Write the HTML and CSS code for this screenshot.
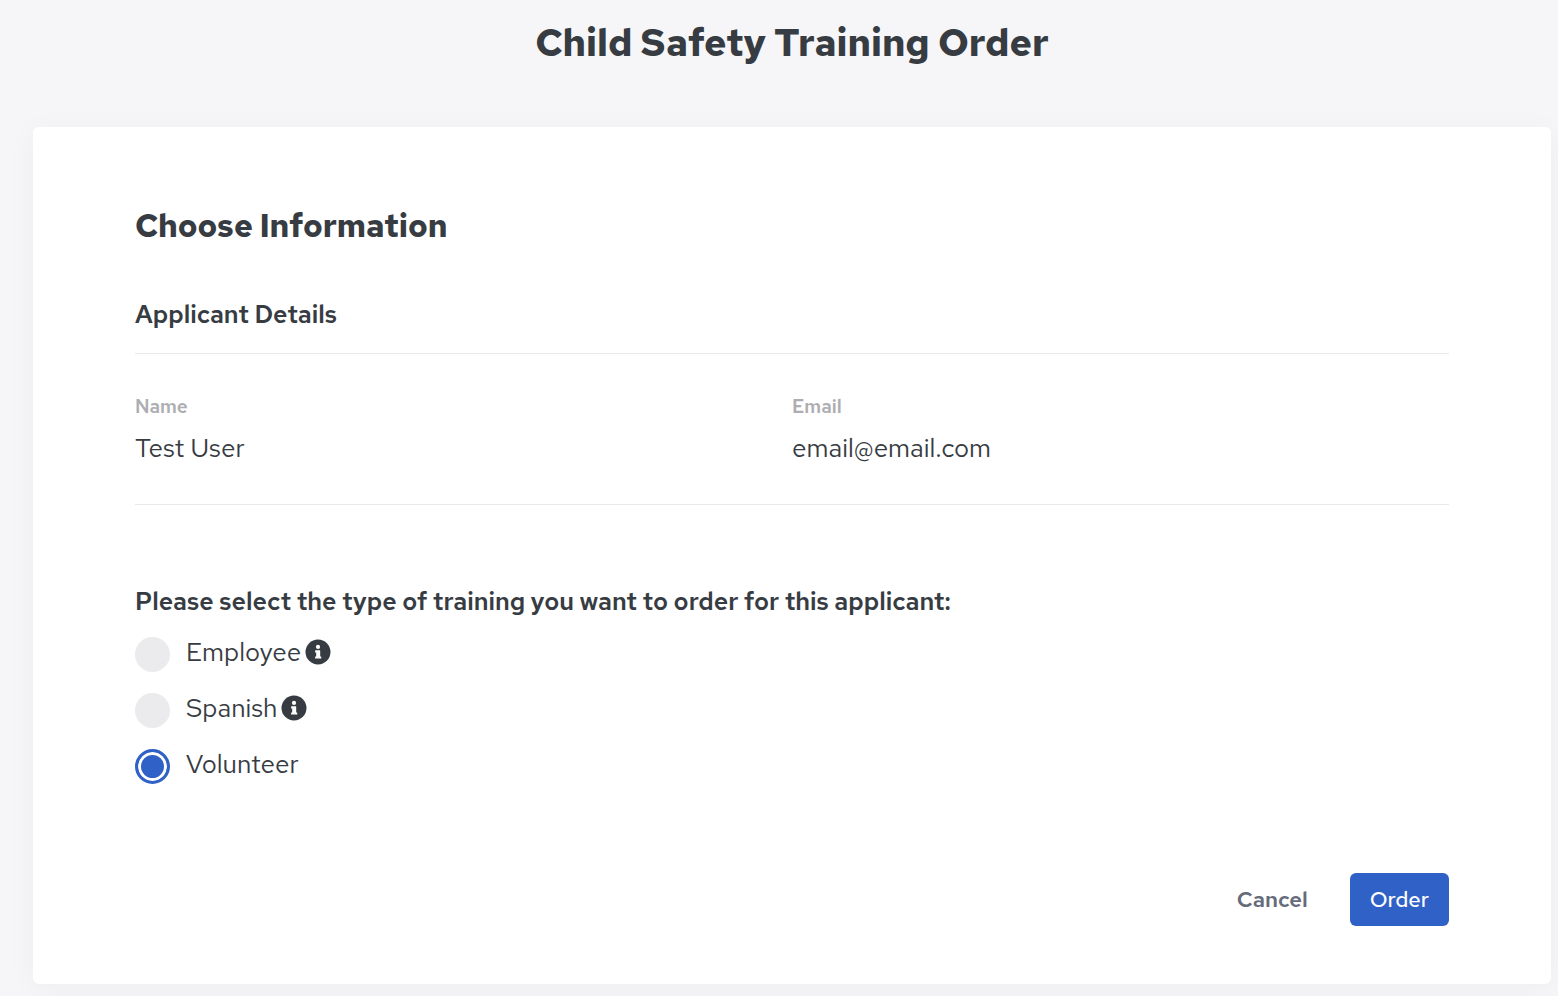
FILE: index.html
```
<!DOCTYPE html>
<html lang="en">
<head>
    <meta charset="UTF-8">
    <meta name="viewport" content="width=device-width, initial-scale=1.0">
    <title>Child Safety Training Order</title>
    <link rel="stylesheet" href="styles.css">
</head>
<body>

    <h1>Child Safety Training Order</h1>

    <form class="card">
        <h2>Choose Information</h2>

        <h3>Applicant Details</h3>
        <dl class="details">
            <div>
                <dt>Name</dt>
                <dd>Test User</dd>
            </div>
            <div>
                <dt>Email</dt>
                <dd>email@email.com</dd>
            </div>
        </dl>

        <fieldset class="training">
            <legend>Please select the type of training you want to order for this applicant:</legend>
            <div class="option">
                <input type="radio" name="training" id="employee">
                <label for="employee">Employee</label>
                <svg class="info" viewBox="0 0 26 26" aria-hidden="true">
                    <circle cx="13" cy="13" r="12.5" fill="#373c43"/>
                    <circle cx="13" cy="7.9" r="2.1" fill="#fff"/>
                    <path d="M10.6 11.3h4.1q.5 0 .5.5v5.7h.6q.5 0 .5.5v1.1q0 .5-.5.5h-5.2q-.5 0-.5-.5v-1.1q0-.5.5-.5h.6v-4.1h-.6q-.5 0-.5-.5v-1.1q0-.5.5-.5z" fill="#fff"/>
                </svg>
            </div>
            <div class="option">
                <input type="radio" name="training" id="spanish">
                <label for="spanish">Spanish</label>
                <svg class="info" viewBox="0 0 26 26" aria-hidden="true">
                    <circle cx="13" cy="13" r="12.5" fill="#373c43"/>
                    <circle cx="13" cy="7.9" r="2.1" fill="#fff"/>
                    <path d="M10.6 11.3h4.1q.5 0 .5.5v5.7h.6q.5 0 .5.5v1.1q0 .5-.5.5h-5.2q-.5 0-.5-.5v-1.1q0-.5.5-.5h.6v-4.1h-.6q-.5 0-.5-.5v-1.1q0-.5.5-.5z" fill="#fff"/>
                </svg>
            </div>
            <div class="option">
                <input type="radio" name="training" id="volunteer" checked>
                <label for="volunteer">Volunteer</label>
            </div>
        </fieldset>

        <div class="actions">
            <button type="button" class="btn">Cancel</button>
            <button type="submit" class="btn btn-primary">Order</button>
        </div>
    </form>

</body>
</html>
```
FILE: styles.css
```
* {
    box-sizing: border-box;
}

body {
    font-family: "Red Hat Text", "Lato", sans-serif;
    font-size: 26px;
    line-height: 32px;
    background: #f6f6f8;
    color: #373c43;
    margin: 0;
    padding: 18px 7px 12px 33px;
}

h1, h2, h3, dl, dd {
    margin: 0;
}

h1 {
    font-size: 38px;
    line-height: 50px;
    font-weight: 800;
    text-align: center;
    margin-bottom: 59px;
}

.card {
    background: #fff;
    border-radius: 6px;
    box-shadow: 0 4px 30px rgba(50, 50, 90, 0.04);
    padding: 78px 102px 58px;
}

h2 {
    font-size: 32px;
    line-height: 42px;
    font-weight: 800;
    margin-bottom: 52px;
}

h3 {
    font-size: 25px;
    font-weight: 600;
    padding-bottom: 22px;
    border-bottom: 1px solid #e9e9eb;
}

.details {
    display: grid;
    grid-template-columns: 1fr 1fr;
    padding: 41px 0 40px;
    border-bottom: 1px solid #e9e9eb;
}

dt {
    font-size: 19px;
    line-height: 24px;
    font-weight: 600;
    color: #aeaeb2;
    margin-bottom: 13px;
}

.training {
    border: 0;
    margin: 0;
    padding: 81px 0 0;
}

legend {
    float: left;
    width: 100%;
    padding: 0;
    margin-bottom: 19px;
    font-size: 25px;
    font-weight: 600;
}

.option {
    clear: both;
    display: flex;
    align-items: center;
    height: 35px;
    margin-bottom: 21px;
}

.option input {
    appearance: none;
    width: 35px;
    height: 35px;
    margin: 0 16px 0 0;
    border-radius: 50%;
    background: #ebebed;
}

.option input:checked {
    border: 3px solid #3061c7;
    background: #3061c7;
    box-shadow: inset 0 0 0 3px #fff;
}

.option label {
    padding-bottom: 5px;
}

.info {
    width: 26px;
    height: 26px;
    margin: 0 0 6px 4px;
}

.actions {
    display: flex;
    justify-content: flex-end;
    gap: 22px;
    padding-top: 68px;
}

.btn {
    font-family: inherit;
    font-size: 22px;
    line-height: 29px;
    font-weight: 600;
    color: #646b7b;
    background: none;
    border: 0;
    border-radius: 6px;
    padding: 12px 20px;
    cursor: pointer;
}

.btn-primary {
    font-weight: 500;
    color: #fff;
    background: #3061c7;
}
```
